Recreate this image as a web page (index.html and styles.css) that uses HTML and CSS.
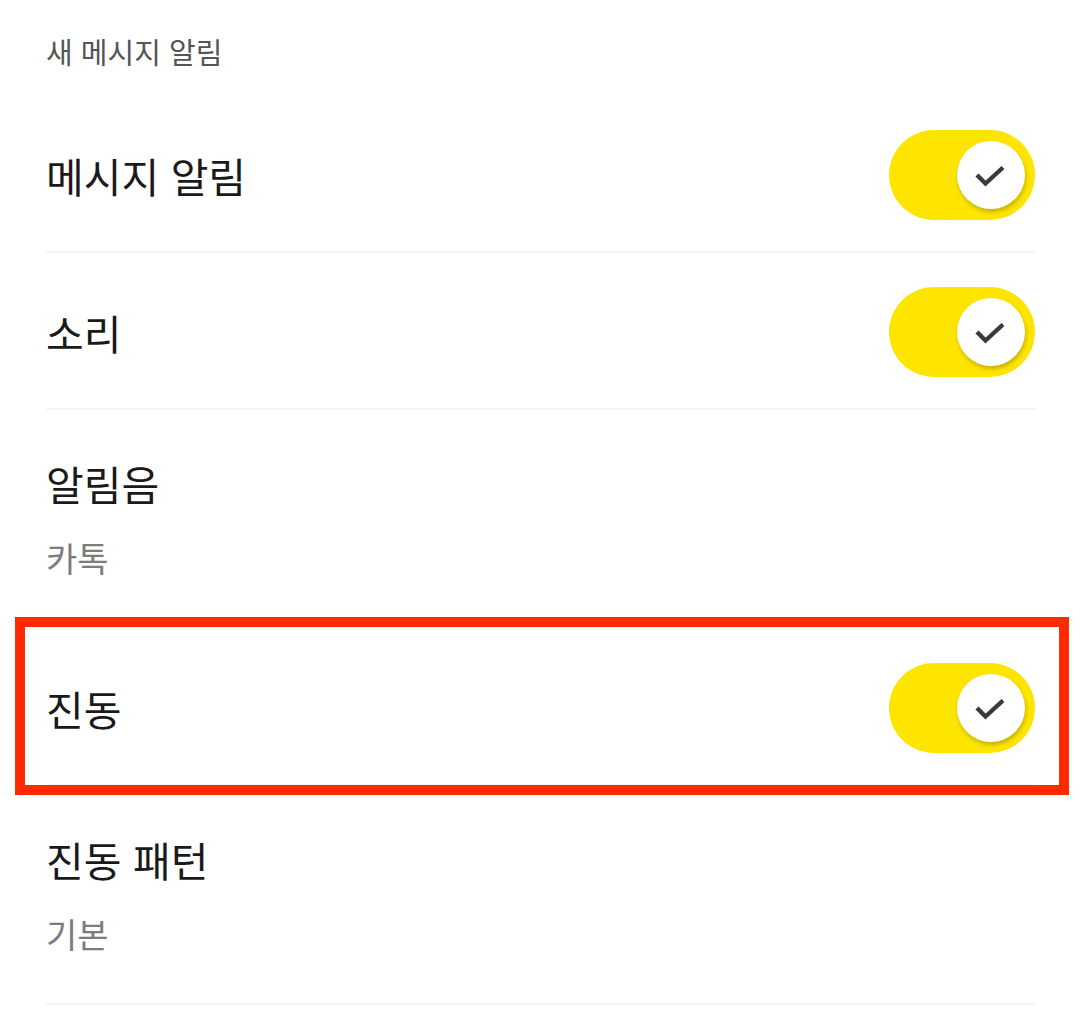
FILE: index.html
```html
<!DOCTYPE html>
<html lang="ko">
<head>
<meta charset="utf-8">
<link rel="stylesheet" href="styles.css">
</head>
<body>
<div class="page">
  <div class="section-title">새 메시지 알림</div>

  <div class="row row-toggle">
    <span class="title">메시지 알림</span>
    <span class="toggle"><span class="knob"><svg viewBox="0 0 30 22" width="30" height="22"><path d="M2 10 L10.5 18.5 L28 2.5" fill="none" stroke="#3a3a3a" stroke-width="4.4"/></svg></span></span>
  </div>

  <div class="row row-toggle">
    <span class="title">소리</span>
    <span class="toggle"><span class="knob"><svg viewBox="0 0 30 22" width="30" height="22"><path d="M2 10 L10.5 18.5 L28 2.5" fill="none" stroke="#3a3a3a" stroke-width="4.4"/></svg></span></span>
  </div>

  <div class="row row-sub no-border">
    <span class="title">알림음</span>
    <span class="sub">카톡</span>
  </div>

  <div class="row row-toggle highlighted">
    <span class="title">진동</span>
    <span class="toggle"><span class="knob"><svg viewBox="0 0 30 22" width="30" height="22"><path d="M2 10 L10.5 18.5 L28 2.5" fill="none" stroke="#3a3a3a" stroke-width="4.4"/></svg></span></span>
  </div>

  <div class="row row-sub">
    <span class="title">진동 패턴</span>
    <span class="sub">기본</span>
  </div>
</div>
</body>
</html>
```

FILE: styles.css
```css
html, body {
  margin: 0;
  padding: 0;
  background: #ffffff;
}

body {
  font-family: "Noto Sans CJK KR", "Noto Sans", sans-serif;
  width: 1080px;
  height: 1012px;
  overflow: hidden;
}

.page {
  padding: 0 45px 0 46px;
}

.section-title {
  height: 96px;
  box-sizing: border-box;
  padding-top: 31px;
  font-size: 29px;
  line-height: 40px;
  color: #555555;
}

.row {
  box-sizing: border-box;
  border-bottom: 2px solid #f4f4f4;
}

.row.no-border {
  border-bottom-color: transparent;
}

.row-toggle {
  height: 157px;
  display: flex;
  align-items: center;
  justify-content: space-between;
  padding-top: 2px;
}

.row-sub {
  height: 219px;
  display: flex;
  flex-direction: column;
  padding-top: 50px;
}

.title {
  font-size: 41px;
  line-height: 46px;
  color: #1a1a1a;
}

.sub {
  margin-top: 31px;
  font-size: 34px;
  line-height: 42px;
  color: #7c7c7c;
}

.toggle {
  width: 146px;
  height: 90px;
  border-radius: 45px;
  background: #fee500;
  display: flex;
  align-items: center;
  justify-content: flex-end;
  padding-right: 10px;
  box-sizing: border-box;
}

.knob {
  width: 68px;
  height: 68px;
  border-radius: 50%;
  background: #ffffff;
  box-shadow: 1px 3px 4px rgba(0, 0, 0, 0.22);
  display: flex;
  align-items: center;
  justify-content: center;
}

.knob svg {
  margin-top: 2px;
  margin-left: -2px;
}

.highlighted {
  position: relative;
}

.highlighted::after {
  content: "";
  position: absolute;
  left: -31px;
  right: -34px;
  top: -12px;
  bottom: -11px;
  border: 10px solid #ff2a00;
  pointer-events: none;
}
```
